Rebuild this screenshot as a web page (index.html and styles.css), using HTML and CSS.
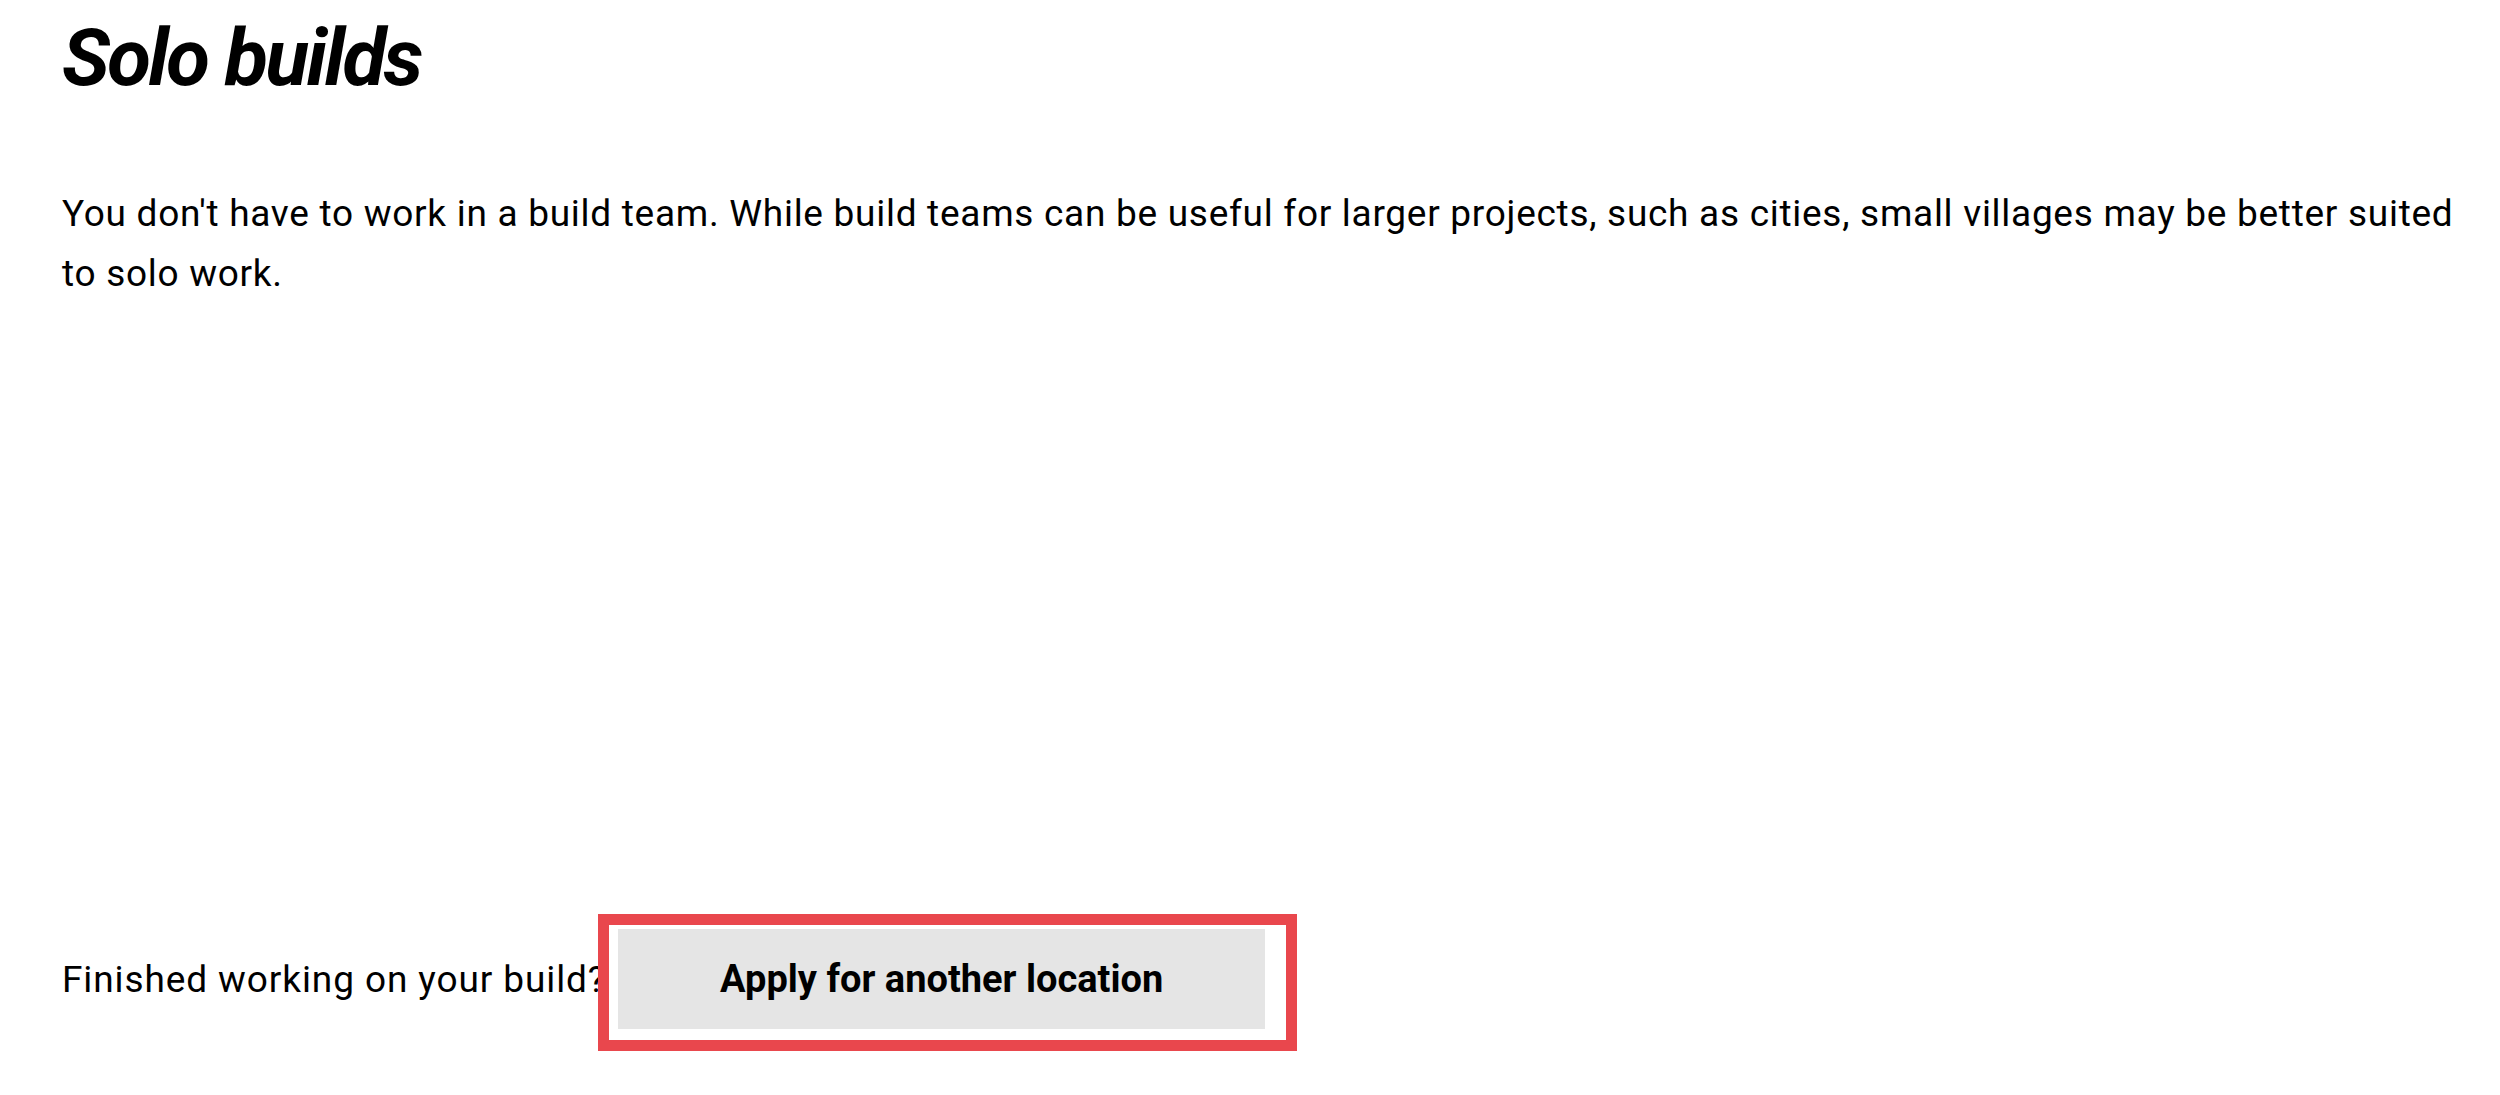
FILE: index.html
```html
<!DOCTYPE html>
<html lang="en">
<head>
<meta charset="utf-8">
<title>Solo builds</title>
<link rel="stylesheet" href="styles.css">
</head>
<body>
<main class="page">
  <h1 class="title">Solo builds</h1>
  <p class="intro">You don't have to work in a build team. While build teams can be useful for larger projects, such as cities, small villages may be better suited to solo work.</p>
  <div class="finish">
    <span class="finish-text">Finished working on your build?</span>
    <span class="highlight"><button class="apply" type="button">Apply for another location</button></span>
  </div>
</main>
</body>
</html>
```
FILE: styles.css
```css
html, body {
  margin: 0;
  padding: 0;
  background: #ffffff;
}
body {
  font-family: "Roboto", "Liberation Sans", sans-serif;
  color: #000000;
}
.page {
  display: flex;
  flex-direction: column;
  padding: 0 30px 0 62px;
  height: 1095px;
  box-sizing: border-box;
}
.title {
  margin: 0;
  padding-top: 10px;
  font-size: 80px;
  line-height: 96px;
  font-weight: 700;
  font-style: italic;
  letter-spacing: -2.6px;
}
.intro {
  margin: 78px 0 0 0;
  font-size: 37px;
  line-height: 60px;
  letter-spacing: 0.72px;
}
.finish {
  margin-top: auto;
  margin-bottom: 66px;
  display: flex;
  align-items: center;
  gap: 12px;
  font-size: 37px;
}
.finish-text {
  letter-spacing: 0.9px;
}
.highlight {
  position: relative;
  display: inline-block;
}
.highlight::after {
  content: "";
  position: absolute;
  top: -15px;
  left: -20px;
  right: -32px;
  bottom: -22px;
  border: 11px solid #e9474d;
  pointer-events: none;
}
.apply {
  display: block;
  width: 647px;
  height: 100px;
  border: none;
  background: #e5e5e5;
  font-family: inherit;
  font-size: 38px;
  font-weight: 700;
  color: #000000;
  padding: 0;
}
```
